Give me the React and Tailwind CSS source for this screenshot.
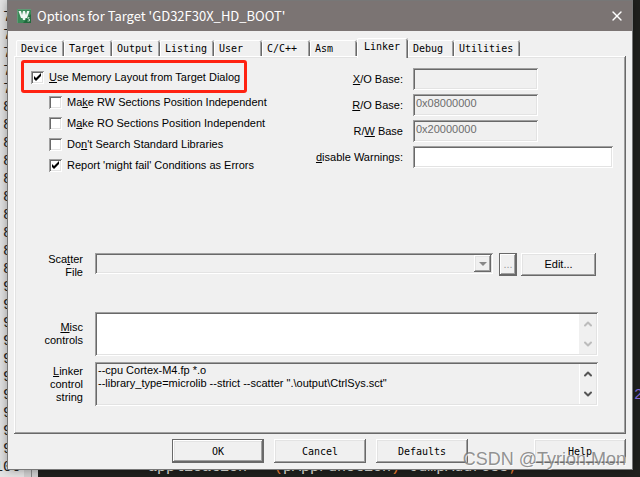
import { useState } from "react";
import { ChevronDown, ChevronUp, X } from "lucide-react";

const sunken =
  "shadow-[inset_1px_1px_#a0a0a0,inset_-1px_-1px_#fff,inset_2px_2px_#696969,inset_-2px_-2px_#e3e3e3]";
const raised =
  "shadow-[inset_-1px_-1px_#696969,inset_1px_1px_#fff,inset_-2px_-2px_#a0a0a0,inset_2px_2px_#e3e3e3]";

const tabs = [
  { name: "Device", width: "w-12" },
  { name: "Target", width: "w-12" },
  { name: "Output", width: "w-12" },
  { name: "Listing", width: "w-[54px]" },
  { name: "User", width: "w-12" },
  { name: "C/C++", width: "w-12" },
  { name: "Asm", width: "w-[47px]" },
  { name: "Linker", width: "w-[51px]" },
  { name: "Debug", width: "w-[46px]" },
  { name: "Utilities", width: "w-[66px]" },
];

const firstLine = 75;
const lines = Array.from({ length: 26 }, (_, i) => firstLine + i);

function CodeLine({ number }) {
  if (number === 96) {
    return (
      <>
        {" ".repeat(66)}
        <span className="text-[#8a6fe0]">2</span>
      </>
    );
  }
  if (number === 100) {
    return (
      <>
        {" ".repeat(12)}application = <span className="text-[#f08030]">(</span>
        pAppFunction<span className="text-[#f08030]">)</span> JumpAddress
        <span className="text-[#f08030]">;</span>
      </>
    );
  }
  return null;
}

function Editor() {
  return (
    <div className="absolute inset-0 flex overflow-hidden bg-[#20211e] font-['Liberation_Mono',monospace] text-[15px] leading-[18px]">
      <div className="flex w-[38px] shrink-0 bg-[#e4e4e4] pt-[9px] text-[#222]">
        <div className="w-[21px]">
          {lines.map((n) => (
            <div key={n} className="flex h-[18px] justify-end">
              {n}
            </div>
          ))}
        </div>
        <div className="ml-[3px] w-[7px] bg-[#d0d0d0]" />
        <div className="w-px bg-[#888]" />
        <div className="flex-1 bg-[#d0d0d0]" />
      </div>
      <div className="flex-1 overflow-hidden pt-[9px] pl-0.5 text-[#e8e8e2]">
        {lines.map((n) => (
          <div key={n} className="h-[18px] whitespace-pre">
            <CodeLine number={n} />
          </div>
        ))}
      </div>
    </div>
  );
}

function Logo() {
  return (
    <svg viewBox="0 0 14 14" className="size-[14px]" aria-hidden="true">
      <rect width="14" height="14" fill="#1f6b3c" />
      <path d="M0 0h14v5L6 14H0z" fill="#3b8a58" />
      <path d="M0.500 14V0.500H14" fill="none" stroke="#5f9a75" />
      <path
        d="M1.500 2H4l1 4 1-4h2l1 4 1-4h2.500L10 9H8.500L8 11H6L5.500 9H4z"
        fill="#f2f7f3"
      />
      <path
        d="M12.500 8.500H11V10h1.500v2H10.500"
        fill="none"
        stroke="#d5e8da"
        strokeWidth="0.8"
      />
    </svg>
  );
}

function Check({ defaultChecked, children }) {
  return (
    <label className="flex items-center gap-[5px]">
      <span className="grid">
        <input
          type="checkbox"
          defaultChecked={defaultChecked}
          className={`peer col-start-1 row-start-1 size-[13px] appearance-none bg-white ${sunken}`}
        />
        <svg
          viewBox="0 0 13 13"
          className="pointer-events-none invisible col-start-1 row-start-1 size-[13px] peer-checked:visible"
        >
          <path d="M3 5l2 2 5-5v3L5 10 3 8z" fill="#000" />
        </svg>
      </span>
      <span>{children}</span>
    </label>
  );
}

function BaseField({ id, label, value, disabled, width }) {
  return (
    <div className="flex h-[22px] items-center gap-[10px]">
      <label htmlFor={id} className="w-[90px] text-right">
        {label}
      </label>
      <input
        id={id}
        type="text"
        defaultValue={value}
        disabled={disabled}
        className={`h-[22px] bg-white px-[3px] pb-1 disabled:bg-[#f0f0f0] disabled:text-[#6d6d6d] ${width} ${sunken}`}
      />
    </div>
  );
}

function TextField({ id, label, value, readOnly, arrows, bg }) {
  return (
    <div className="flex gap-3">
      <label
        htmlFor={id}
        className="flex w-[69px] shrink-0 flex-col justify-center text-right"
      >
        {label}
      </label>
      <div className={`flex h-11 flex-1 p-0.5 ${bg} ${sunken}`}>
        <textarea
          id={id}
          defaultValue={value}
          readOnly={readOnly}
          className="flex-1 resize-none overflow-hidden whitespace-pre pl-px"
        />
        <div
          className={`flex w-[17px] flex-col items-center justify-between bg-[#f0f0f0] py-1 ${arrows}`}
        >
          <button aria-label="Scroll up">
            <ChevronUp size={12} strokeWidth={4} />
          </button>
          <button aria-label="Scroll down">
            <ChevronDown size={12} strokeWidth={4} />
          </button>
        </div>
      </div>
    </div>
  );
}

function LinkerPage() {
  return (
    <div>
      <div className="flex justify-between pr-[13px] pl-[7px]">
        <div className="pt-1">
          <div className="flex h-[33px] w-[226px] items-center rounded-[3px] border-[3px] border-[#ff2211] pt-px pl-[7px]">
            <Check defaultChecked>
              <u>U</u>se Memory Layout from Target Dialog
            </Check>
          </div>
          <div className="-mt-px pl-7 *:h-[21px]">
            <Check>
              Ma<u>k</u>e RW Sections Position Independent
            </Check>
            <Check>
              M<u>a</u>ke RO Sections Position Independent
            </Check>
            <Check>
              Do<u>n</u>'t Search Standard Libraries
            </Check>
            <Check defaultChecked>
              Report 'mi<u>g</u>ht fail' Conditions as Errors
            </Check>
          </div>
        </div>

        <div className="flex flex-col gap-1 pt-3">
          <BaseField
            id="xo"
            label={<><u>X</u>/O Base:</>}
            width="w-[125px]"
            disabled
          />
          <BaseField
            id="ro"
            label={<><u>R</u>/O Base:</>}
            value="0x08000000"
            width="w-[125px]"
            disabled
          />
          <BaseField
            id="rw"
            label={<>R/<u>W</u> Base</>}
            value="0x20000000"
            width="w-[125px]"
            disabled
          />
          <BaseField
            id="warnings"
            label={<><u>d</u>isable Warnings:</>}
            width="w-[200px]"
          />
        </div>
      </div>

      <div className="mt-[77px] flex pr-[30px]">
        <label htmlFor="scatter" className="mr-3 w-[69px] shrink-0 text-right">
          Sca<u>t</u>ter
          <br />
          File
        </label>
        <div className={`flex h-[21px] flex-1 p-0.5 ${sunken}`}>
          <select id="scatter" disabled className="flex-1 appearance-none" />
          <span className={`grid w-[17px] place-items-center ${raised}`}>
            <svg viewBox="0 0 8 4" className="h-1 w-2">
              <path d="M0 0h8L4 4z" fill="#888" />
            </svg>
          </span>
        </div>
        <button
          disabled
          aria-label="Browse"
          className="ml-1.5 h-[23px] w-[18px] border border-[#696969] text-[#999] shadow-[inset_-1px_-1px_#696969,inset_1px_1px_#fff,inset_-2px_-2px_#a0a0a0]"
        >
          ...
        </button>
        <button className={`ml-1 h-[23px] w-[75px] ${raised}`}>Edit...</button>
      </div>

      <div className="mt-[33px] flex flex-col gap-1.5 pr-7">
        <TextField
          id="misc"
          label={
            <span>
              <u>M</u>isc
              <br />
              controls
            </span>
          }
          bg="bg-white"
          arrows="text-[#bcbcbc]"
        />
        <TextField
          id="control"
          label={
            <span>
              <u>L</u>inker
              <br />
              control
              <br />
              string
            </span>
          }
          value={
            '--cpu Cortex-M4.fp *.o\n--library_type=microlib --strict --scatter ".\\output\\CtrlSys.sct"'
          }
          bg="bg-[#f0f0f0]"
          arrows="border-l border-white text-[#555]"
          readOnly
        />
      </div>
    </div>
  );
}

function App() {
  const [active, setActive] = useState("Linker");

  return (
    <div className="relative min-h-screen overflow-hidden px-[7px] pb-[7px] font-['Liberation_Sans',Arial,sans-serif] text-[11px] leading-[13px] text-black">
      <Editor />

      <main className="relative border border-[#777] bg-[#f0f0f0] pb-[6px] shadow-[0_0_10px_rgba(0,0,0,0.35)]">
        <header className="flex h-[30px] items-center bg-[#7b7473] pr-[7px] pl-[9px] text-white">
          <Logo />
          <h1 className="ml-1.5 flex-1 font-['Noto_Sans_CJK_SC','Open_Sans',sans-serif] text-[13px] leading-4">
            Options for Target 'GD32F30X_HD_BOOT'
          </h1>
          <button aria-label="Close">
            <X size={16} strokeWidth={2} />
          </button>
        </header>

        <nav className="flex items-end pt-[7px] pl-2 font-['DejaVu_Sans_Mono',monospace] text-[10px]">
          {tabs.map((tab) => (
            <button
              key={tab.name}
              onClick={() => setActive(tab.name)}
              className={`rounded-t-[2px] bg-[#f0f0f0] text-left shadow-[inset_1px_0_#fff,inset_0_1px_#fff,inset_-1px_0_#696969,inset_-2px_0_#a0a0a0] ${tab.width} ${
                active === tab.name
                  ? "relative z-10 -mb-0.5 h-5 pb-1 pl-[7px]"
                  : "h-4 pl-[5px]"
              }`}
            >
              {tab.name}
            </button>
          ))}
        </nav>

        <section className={`mr-[6px] ml-[6px] h-[378px] ${raised}`}>
          <LinkerPage />
        </section>

        <footer className="mt-[5px] flex gap-[10px] pr-[6px] pl-[164px] font-['DejaVu_Sans_Mono',monospace] text-[10px]">
          <button
            className={`h-6 w-[92px] border border-[#696969] ${raised}`}
          >
            OK
          </button>
          <button className={`h-6 w-[92px] ${raised}`}>Cancel</button>
          <button className={`h-6 w-[92px] ${raised}`}>Defaults</button>
          <button className={`ml-auto h-6 w-[92px] ${raised}`}>Help</button>
        </footer>
      </main>

      <div className="pointer-events-none absolute right-3.5 bottom-2 text-[18px] leading-5 text-[#777]/80 [text-shadow:1px_1px_#ffffffb0]">
        CSDN @Tyrion.Mon
      </div>
    </div>
  );
}

export default App;
